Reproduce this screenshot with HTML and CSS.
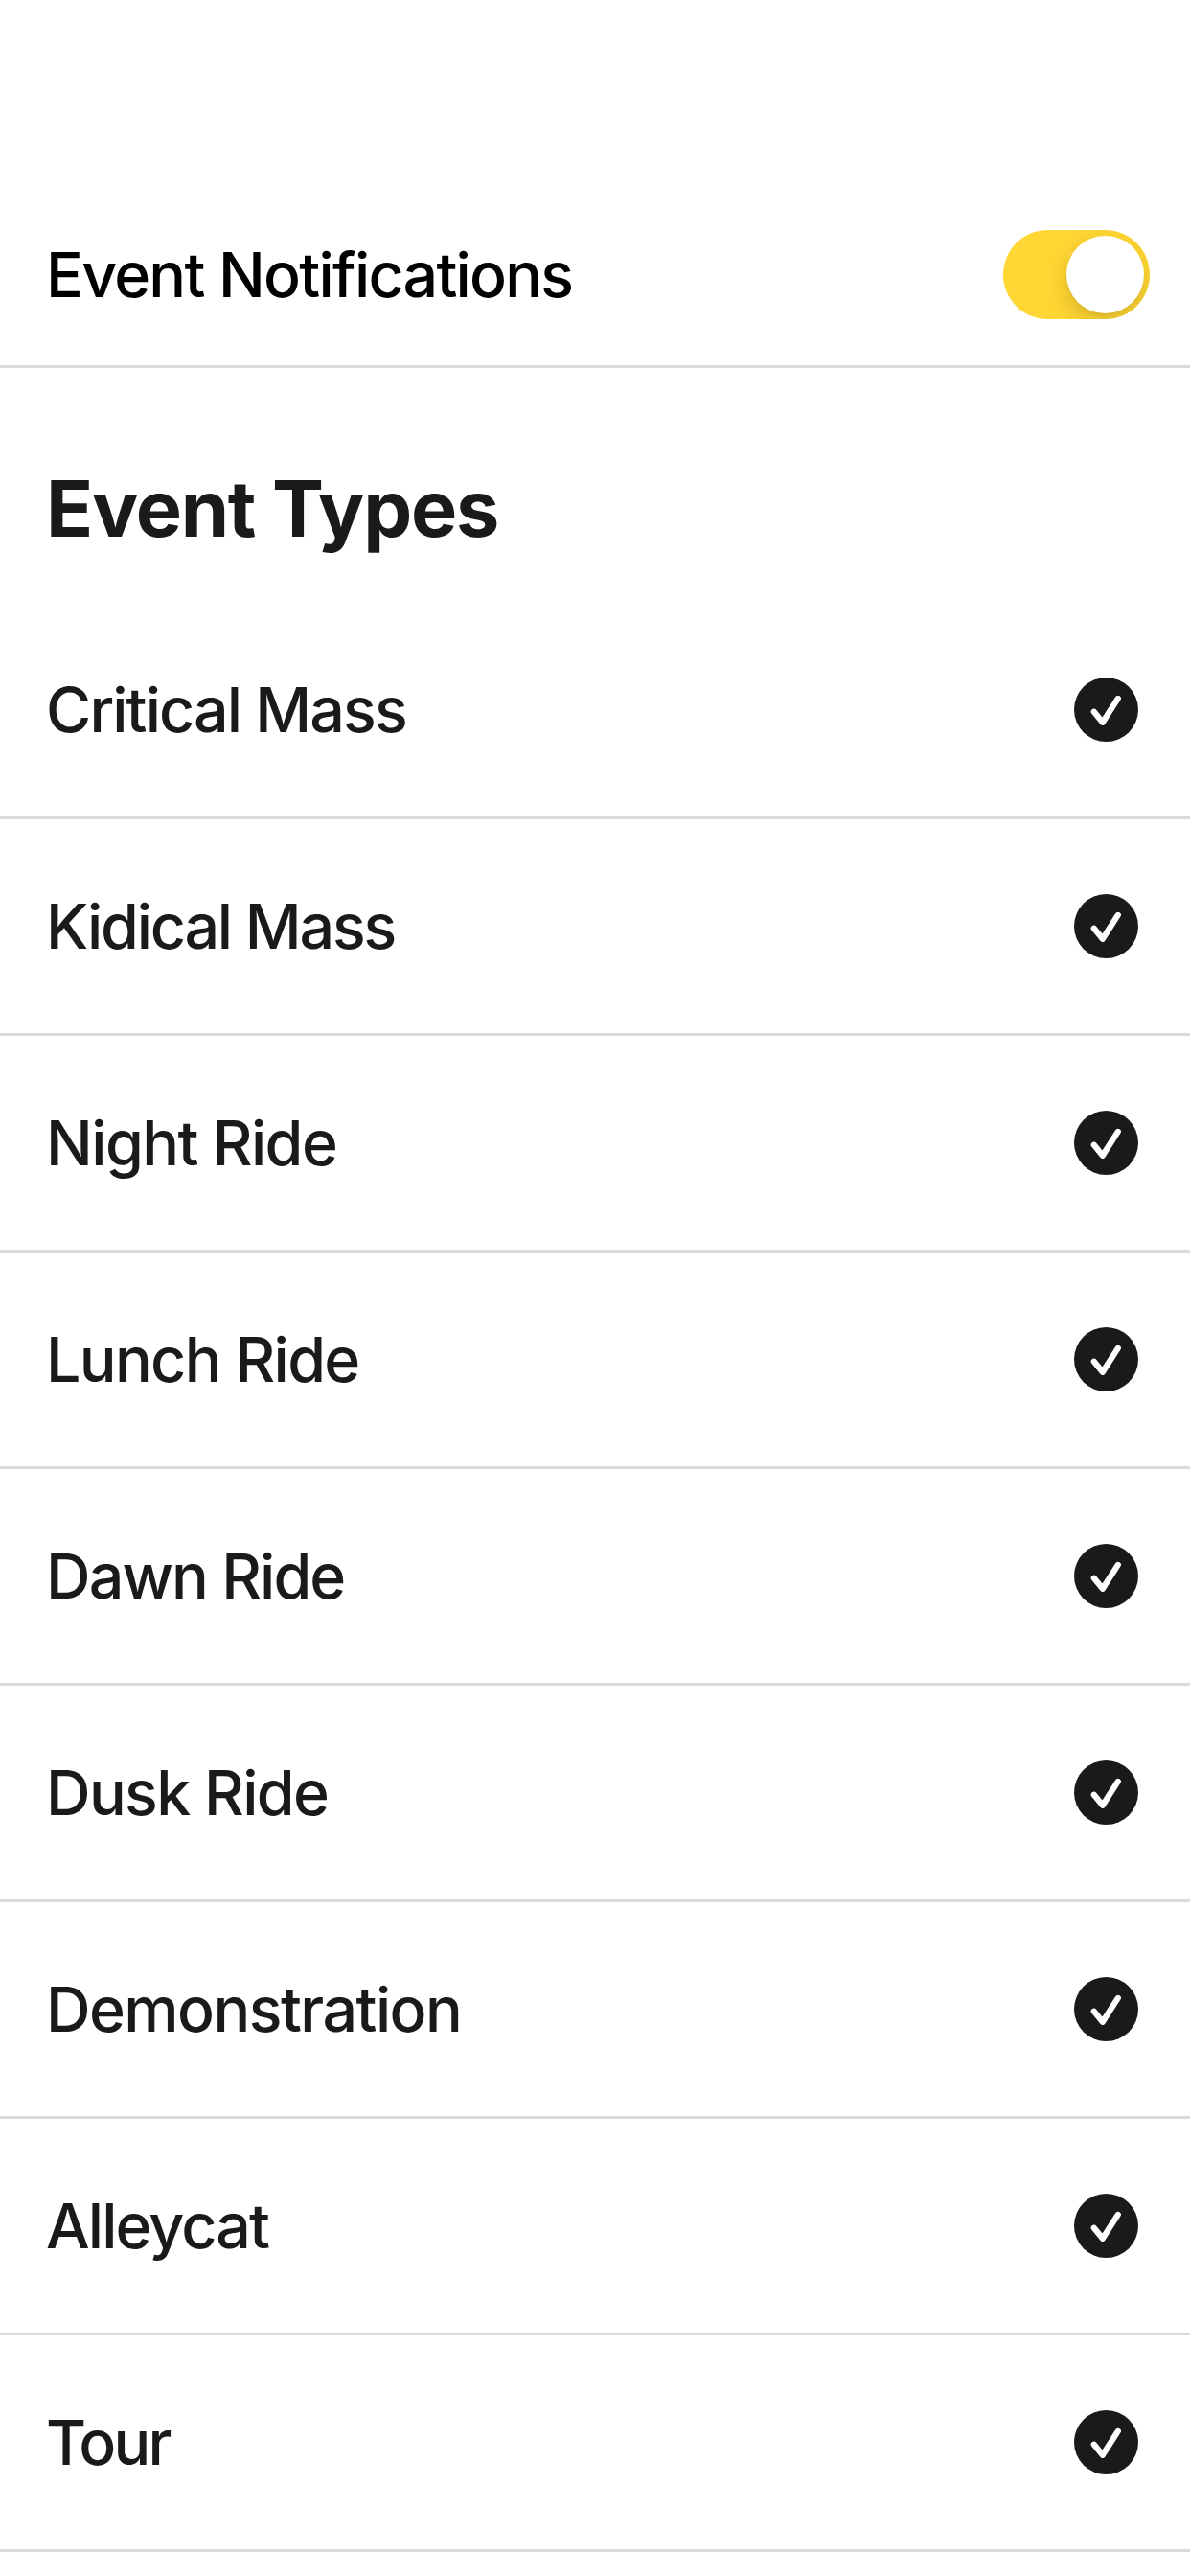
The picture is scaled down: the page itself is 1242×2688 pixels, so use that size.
FILE: index.html
```html
<!DOCTYPE html>
<html lang="en">
<head>
<meta charset="utf-8">
<title>Event Notifications</title>
<link rel="stylesheet" href="styles.css">
</head>
<body>
<svg class="defs" aria-hidden="true">
  <symbol id="check" viewBox="0 0 67 67">
    <circle cx="33.5" cy="33.5" r="33.5" fill="#1a1a1b"/>
    <path d="M20.8 35.7L29.8 46.8L45.8 21.9" fill="none" stroke="#fff" stroke-width="6.2" stroke-linecap="round" stroke-linejoin="round"/>
  </symbol>
</svg>
<main class="screen">
  <header class="notifications">
    <span class="title">Event Notifications</span>
    <span class="switch" role="switch" aria-checked="true"><span class="knob"></span></span>
  </header>
  <h1 class="heading"><span class="heading-text">Event Types</span></h1>
  <ul class="list">
    <li class="row"><span class="label">Critical Mass</span><svg class="check"><use href="#check"/></svg></li>
    <li class="row"><span class="label tight">Kidical Mass</span><svg class="check"><use href="#check"/></svg></li>
    <li class="row"><span class="label loose">Night Ride</span><svg class="check"><use href="#check"/></svg></li>
    <li class="row"><span class="label open">Lunch Ride</span><svg class="check"><use href="#check"/></svg></li>
    <li class="row"><span class="label">Dawn Ride</span><svg class="check"><use href="#check"/></svg></li>
    <li class="row"><span class="label open">Dusk Ride</span><svg class="check"><use href="#check"/></svg></li>
    <li class="row"><span class="label loose">Demonstration</span><svg class="check"><use href="#check"/></svg></li>
    <li class="row"><span class="label">Alleycat</span><svg class="check"><use href="#check"/></svg></li>
    <li class="row"><span class="label tightest">Tour</span><svg class="check"><use href="#check"/></svg></li>
  </ul>
</main>
</body>
</html>
```
FILE: styles.css
```css
* { box-sizing: border-box; }
body { margin: 0; background: #fff; color: #1a1a1b; font-family: Inter, "Liberation Sans", sans-serif; }
.defs { display: none; }
.screen { width: 1242px; height: 2688px; padding-top: 192px; overflow: hidden; }
.notifications { display: flex; align-items: center; justify-content: space-between; height: 192px; padding: 0 42px 0 48px; border-bottom: 3px solid #dadade; color: #000; }
.title, .label { font-size: 64.5px; font-weight: 520; letter-spacing: -1.9px; line-height: 80px; white-space: nowrap; }
.title { letter-spacing: -1.75px; }
.label.open { letter-spacing: -1.65px; }
.label.loose { letter-spacing: -1.55px; }
.label.tight { letter-spacing: -2.2px; }
.label.tightest { letter-spacing: -2.8px; }
.switch { display: flex; justify-content: flex-end; width: 153px; height: 93px; padding: 6px; overflow: hidden; border-radius: 47px; background: #ffd633; }
.knob { width: 81px; height: 81px; border-radius: 50%; background: #fff; box-shadow: 0 9px 24px rgba(0,0,0,.15), 0 3px 3px rgba(0,0,0,.04); }
.heading { display: flex; align-items: center; height: 245px; margin: 0; padding: 48px 48px 0; font-size: 81px; font-weight: 700; letter-spacing: -1.3px; }
.list { margin: 0; padding: 0; list-style: none; }
.row { display: flex; align-items: center; justify-content: space-between; height: 226px; padding: 0 54px 0 48px; border-bottom: 3px solid #dadade; }
.check { width: 67px; height: 67px; }
```
